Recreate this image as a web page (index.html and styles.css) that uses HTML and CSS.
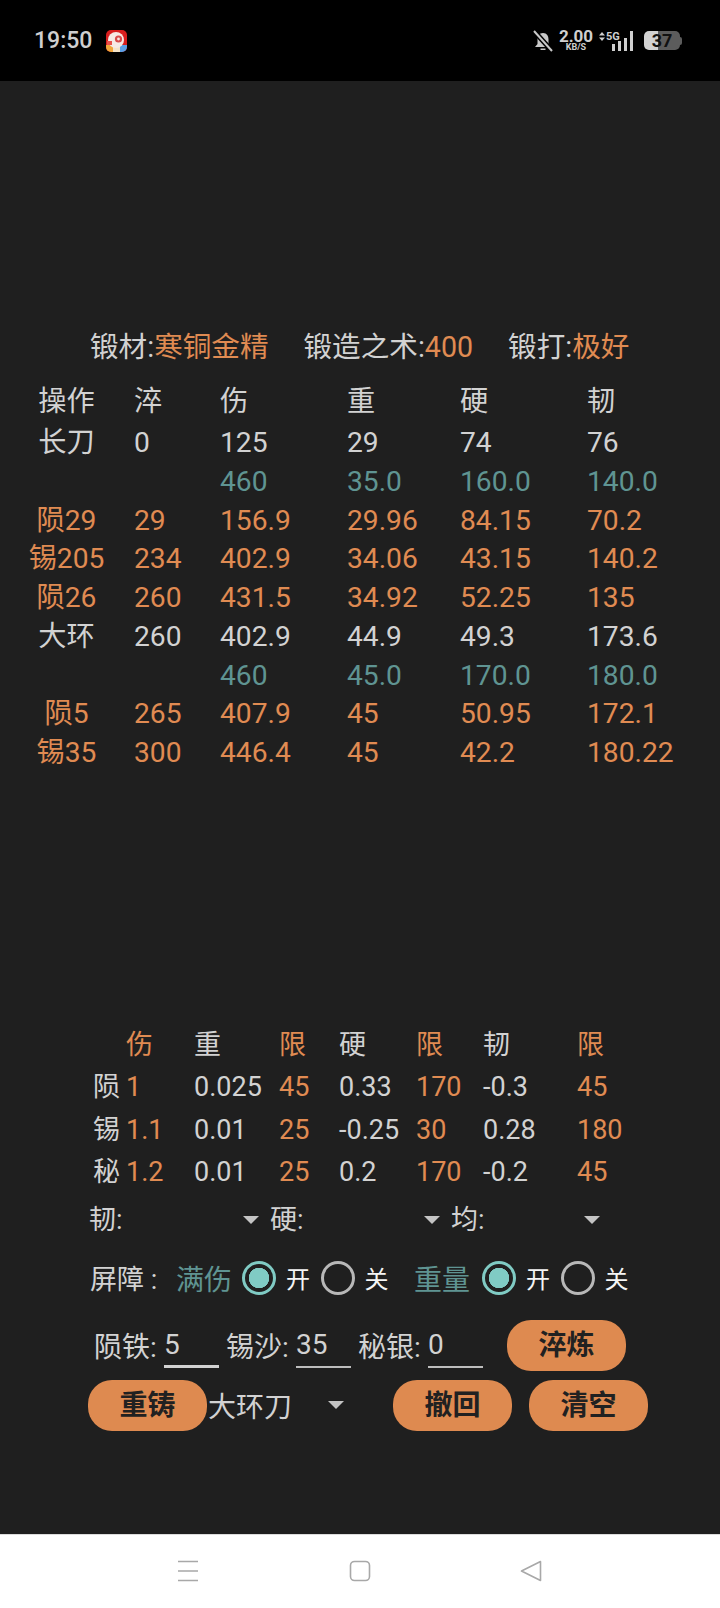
FILE: index.html
```html
<!DOCTYPE html>
<html lang="en">
<head>
  <meta charset="UTF-8">
  <title>锻造</title>
  <link rel="stylesheet" href="styles.css">
</head>
<body>
  <!-- Status bar -->
  <div class="status-bar">
    <div class="time">19:50</div>
    <svg class="app-icon" width="21" height="22" viewBox="0 0 21 22">
      <clipPath id="app-clip"><rect width="21" height="22" rx="5"/></clipPath>
      <g clip-path="url(#app-clip)">
        <rect width="21" height="22" fill="#d81e1e"/>
        <rect y="15" width="7" height="7" fill="#f0a53a"/>
        <rect x="7" y="15" width="7" height="7" fill="#f4e3c8"/>
        <rect x="14" y="15" width="7" height="7" fill="#5a9fe6"/>
        <circle cx="10" cy="10" r="8" fill="#f6e9e4"/>
        <circle cx="12.5" cy="9" r="3.6" fill="#d84a4a"/>
        <circle cx="12.5" cy="9" r="1.4" fill="#f6e9e4"/>
        <rect x="1" y="11" width="5" height="4" fill="#e8504a"/>
      </g>
    </svg>
    <div class="status-right">
      <svg width="22" height="22" viewBox="0 0 22 22">
        <path d="M11 3 C7 3 5.5 6 5.5 9.5 L5.5 14 L3 17 L19 17 L16.5 14 L16.5 9.5 C16.5 6 15 3 11 3 Z" fill="#c8c8c8"/>
        <path d="M8.5 18.5 H13.5 V20 H8.5 Z" fill="#c8c8c8"/>
        <path d="M2 1 L20 21" stroke="#000" stroke-width="5"/>
        <path d="M2 1 L20 21" stroke="#c8c8c8" stroke-width="2"/>
      </svg>
      <div class="speed">
        <div class="speed-num">2.00</div>
        <div class="speed-unit">KB/S</div>
      </div>
      <div class="net">
        <div class="net-label">
          <svg width="6" height="9" viewBox="0 0 6 9" fill="#cfcfcf"><path d="M3 0 L6 3.6 H0 Z M3 9 L0 5.4 H6 Z"/></svg>
          <span>5G</span>
        </div>
        <i class="b1"></i><i class="b2"></i><i class="b3"></i><i class="b4"></i>
      </div>
      <div class="battery">
        <div class="battery-body"><span>37</span></div>
        <div class="battery-tip"></div>
      </div>
    </div>
  </div>

  <div class="main">
    <div class="summary">
      <div>锻材:<span class="orange">寒铜金精</span></div>
      <div>锻造之术:<span class="orange">400</span></div>
      <div>锻打:<span class="orange">极好</span></div>
    </div>

    <!-- Forging log -->
    <div class="log">
      <div class="op">操作</div><div>淬</div><div>伤</div><div>重</div><div>硬</div><div>韧</div>
      <div class="op">长刀</div><div>0</div><div>125</div><div>29</div><div>74</div><div>76</div>
      <div class="op"></div><div></div><div class="teal">460</div><div class="teal">35.0</div><div class="teal">160.0</div><div class="teal">140.0</div>
      <div class="op orange">陨29</div><div class="orange">29</div><div class="orange">156.9</div><div class="orange">29.96</div><div class="orange">84.15</div><div class="orange">70.2</div>
      <div class="op orange">锡205</div><div class="orange">234</div><div class="orange">402.9</div><div class="orange">34.06</div><div class="orange">43.15</div><div class="orange">140.2</div>
      <div class="op orange">陨26</div><div class="orange">260</div><div class="orange">431.5</div><div class="orange">34.92</div><div class="orange">52.25</div><div class="orange">135</div>
      <div class="op">大环</div><div>260</div><div>402.9</div><div>44.9</div><div>49.3</div><div>173.6</div>
      <div class="op"></div><div></div><div class="teal">460</div><div class="teal">45.0</div><div class="teal">170.0</div><div class="teal">180.0</div>
      <div class="op orange">陨5</div><div class="orange">265</div><div class="orange">407.9</div><div class="orange">45</div><div class="orange">50.95</div><div class="orange">172.1</div>
      <div class="op orange">锡35</div><div class="orange">300</div><div class="orange">446.4</div><div class="orange">45</div><div class="orange">42.2</div><div class="orange">180.22</div>
    </div>

    <!-- Material table -->
    <div class="materials">
      <div></div><div class="orange">伤</div><div>重</div><div class="orange">限</div><div>硬</div><div class="orange">限</div><div>韧</div><div class="orange">限</div>
      <div>陨</div><div class="orange">1</div><div>0.025</div><div class="orange">45</div><div>0.33</div><div class="orange">170</div><div>-0.3</div><div class="orange">45</div>
      <div>锡</div><div class="orange">1.1</div><div>0.01</div><div class="orange">25</div><div>-0.25</div><div class="orange">30</div><div>0.28</div><div class="orange">180</div>
      <div>秘</div><div class="orange">1.2</div><div>0.01</div><div class="orange">25</div><div>0.2</div><div class="orange">170</div><div>-0.2</div><div class="orange">45</div>
    </div>

    <div class="selects">
      <div class="select select-wide">韧:<i class="arrow"></i></div>
      <div class="select select-wide">硬:<i class="arrow"></i></div>
      <div class="select">均:<i class="arrow"></i></div>
    </div>

    <div class="barrier">
      <div class="barrier-label">屏障 :</div>
      <div class="teal barrier-name">满伤</div>
      <i class="radio on"></i><div class="radio-text">开</div>
      <i class="radio"></i><div class="radio-text">关</div>
      <div class="teal barrier-name second">重量</div>
      <i class="radio on"></i><div class="radio-text">开</div>
      <i class="radio"></i><div class="radio-text">关</div>
    </div>

    <div class="inputs">
      <div class="field-label">陨铁:</div><div class="field focused">5</div>
      <div class="field-label">锡沙:</div><div class="field">35</div>
      <div class="field-label">秘银:</div><div class="field">0</div>
      <div class="btn quench">淬炼</div>
    </div>

    <div class="actions">
      <div class="btn">重铸</div>
      <div class="select blade">大环刀<i class="arrow"></i></div>
      <div class="btn undo">撤回</div>
      <div class="btn">清空</div>
    </div>
  </div>

  <!-- Nav bar -->
  <div class="nav">
    <svg width="22" height="22" viewBox="0 0 22 22" fill="none" stroke="#a8a8a8" stroke-width="1.6">
      <path d="M1 1.5 H21 M1 11 H21 M1 20.5 H21"/>
    </svg>
    <svg width="22" height="22" viewBox="0 0 22 22" fill="none" stroke="#a8a8a8" stroke-width="1.6">
      <rect x="1.5" y="1.5" width="19" height="19" rx="4"/>
    </svg>
    <svg width="22" height="22" viewBox="0 0 22 22" fill="none" stroke="#a8a8a8" stroke-width="1.6" stroke-linejoin="round">
      <path d="M1.5 11 L20.5 1.5 V20.5 Z"/>
    </svg>
  </div>
</body>
</html>
```

FILE: styles.css
```css
html, body {
  margin: 0;
  padding: 0;
  height: 100%;
}

body {
  display: flex;
  flex-direction: column;
  width: 720px;
  height: 1608px;
  overflow: hidden;
  background: #1f1f1f;
  color: #d2d2d2;
  font-family: Roboto, "Noto Sans CJK SC", sans-serif;
  font-size: 28px;
}

.orange { color: #e08b52; }
.teal { color: #5f9492; }

/* Status bar */
.status-bar {
  height: 81px;
  flex: none;
  background: #000;
  display: flex;
  align-items: center;
  padding: 0 38px 0 34px;
  box-sizing: border-box;
}

.time {
  font-size: 23px;
  font-weight: 500;
  color: #cfcfcf;
  margin-right: 14px;
}

.status-right {
  margin-left: auto;
  display: flex;
  align-items: center;
  color: #cfcfcf;
}

.speed {
  margin-left: 4px;
  width: 36px;
  text-align: center;
  font-weight: 700;
}

.speed-num { font-size: 17px; line-height: 13px; }
.speed-unit { font-size: 9px; line-height: 9px; }

.net {
  margin-left: 18px;
  display: flex;
  align-items: flex-end;
  gap: 3px;
  position: relative;
  height: 20px;
}

.net i {
  width: 3px;
  background: #cfcfcf;
  display: block;
}

.net .b1 { height: 7px; }
.net .b2 { height: 10px; }
.net .b3 { height: 13px; }
.net .b4 { height: 20px; }

/* sits over the short signal bars */
.net-label {
  position: absolute;
  left: -13px;
  top: 0;
  display: flex;
  align-items: center;
  gap: 1px;
  font-size: 11px;
  font-weight: 700;
  line-height: 11px;
}

.battery {
  margin-left: 11px;
  display: flex;
  align-items: center;
}

.battery-body {
  width: 36px;
  height: 19px;
  border-radius: 5px;
  background: linear-gradient(to right, #d2d2d2 0 38%, #5c5c5c 38%);
  color: #111;
  font-size: 18px;
  font-weight: 700;
  line-height: 19px;
  text-align: center;
}

.battery-tip {
  width: 2px;
  height: 8px;
  background: #5c5c5c;
  border-radius: 0 2px 2px 0;
}

/* Main */
.main {
  flex: 1;
  padding-top: 247px;
}

.summary {
  display: flex;
  padding-left: 90px;
  gap: 35px;
  font-size: 28.6px;
  line-height: 38px;
}

.log {
  display: grid;
  grid-template-columns: 108px 86px 127px 113px 127px auto;
  grid-template-rows: 41px;
  grid-auto-rows: 38.75px;
  padding-left: 26px;
  margin-top: 16px;
  font-size: 28.2px;
  line-height: 39px;
  white-space: nowrap;
}

.op {
  width: 81px;
  text-align: center;
}

.materials {
  display: grid;
  grid-template-columns: 33px 68px 85px 60px 77px 67px 94px auto;
  grid-auto-rows: 42.5px;
  padding-left: 93px;
  margin-top: 252px;
  font-size: 27px;
  line-height: 42px;
  white-space: nowrap;
}

.selects {
  display: flex;
  padding-left: 89px;
  font-size: 27px;
  line-height: 46px;
  margin-top: 3px;
}

.select {
  display: flex;
  align-items: center;
}

.select-wide { width: 181px; }

.selects .select:last-child { width: 160px; }

.arrow {
  margin-left: auto;
  margin-right: 11px;
  width: 0;
  height: 0;
  border-left: 8px solid transparent;
  border-right: 8px solid transparent;
  border-top: 8px solid #c4c4c4;
}

.barrier {
  display: flex;
  align-items: center;
  padding-left: 90px;
  margin-top: 14px;
  height: 42px;
}

.barrier-label {
  font-size: 27px;
  width: 86px;
  white-space: nowrap;
}

.barrier-name { width: 66px; }
.barrier-name.second { margin-left: 15px; width: 68px; }

.radio {
  width: 34px;
  height: 34px;
  box-sizing: border-box;
  border: 3.5px solid #b8b8b8;
  border-radius: 50%;
  margin-right: 10px;
  flex: none;
}

.radio.on {
  border-color: #80cbc4;
  background: radial-gradient(circle, #80cbc4 0 10px, transparent 10.5px);
}

.radio-text {
  font-size: 24px;
  color: #f5f5f5;
  width: 34.5px;
}

.inputs {
  display: flex;
  align-items: flex-start;
  padding-left: 94px;
  margin-top: 18px;
}

.field-label {
  line-height: 50px;
  margin-top: 6px;
  width: 70px;
  white-space: nowrap;
}

.field {
  width: 55px;
  height: 51px;
  padding-top: 8px;
  line-height: 40px;
  box-sizing: border-box;
  border-bottom: 2px solid #bdbdbd;
  margin-right: 7px;
}

.field.focused { border-bottom: 3px solid #d2d2d2; }

.btn {
  width: 119px;
  height: 51px;
  flex: none;
  border-radius: 24px;
  background: #de8a50;
  color: #212121;
  font-weight: 700;
  text-align: center;
  line-height: 51px;
}

.quench { margin-left: 17px; margin-top: 3px; }

.actions {
  display: flex;
  align-items: center;
  padding-left: 88px;
  margin-top: 7px;
}

.blade { width: 145px; margin-left: 1px; }
.blade .arrow { margin-right: 9px; }
.undo { margin-left: 40px; margin-right: 17px; }

/* Nav bar */
.nav {
  height: 74px;
  flex: none;
  box-sizing: border-box;
  background: #fff;
  border-top: 1px solid #dcdcdc;
  display: flex;
  justify-content: space-between;
  align-items: center;
  padding: 0 178px 1px 177px;
}
```
